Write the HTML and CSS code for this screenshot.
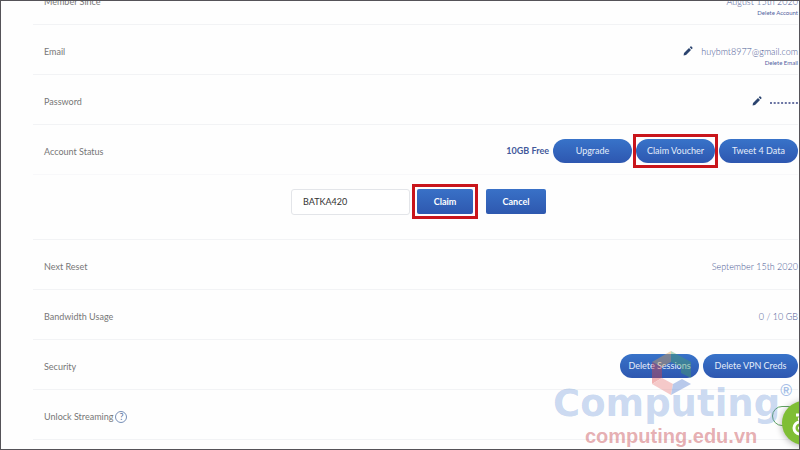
FILE: index.html
```html
<!DOCTYPE html>
<html lang="en">
<head>
<meta charset="utf-8">
<title>Account</title>
<link rel="stylesheet" href="styles.css">
</head>
<body>
<main class="account">
  <section class="row">
    <span class="label">Member Since</span>
    <div class="stack"><span class="value">August 15th 2020</span><a class="small-link" href="#">Delete Account</a></div>
  </section>
  <section class="row">
    <span class="label">Email</span>
    <button class="edit" aria-label="Edit email"><svg viewBox="0 0 10 10"><path d="M.6 9.4 1 7 6 2 8 4 3 9zM6.7 1.3 7.5.5Q8 .1 8.5.6L9.4 1.5Q9.8 2 9.4 2.5L8.6 3.3z"/></svg></button>
    <div class="stack"><span class="value">huybmt8977@gmail.com</span><a class="small-link" href="#">Delete Email</a></div>
  </section>
  <section class="row">
    <span class="label">Password</span>
    <button class="edit" aria-label="Edit password"><svg viewBox="0 0 10 10"><path d="M.6 9.4 1 7 6 2 8 4 3 9zM6.7 1.3 7.5.5Q8 .1 8.5.6L9.4 1.5Q9.8 2 9.4 2.5L8.6 3.3z"/></svg></button>
    <svg class="dots" viewBox="0 0 28 4" role="img" aria-label="Hidden password"><path d="M0 2h28"/></svg>
  </section>
  <section class="row soft">
    <span class="label">Account Status</span>
    <strong class="plan">10GB Free</strong>
    <div class="actions">
      <button class="pill">Upgrade</button>
      <button class="pill marked">Claim Voucher</button>
      <button class="pill">Tweet 4 Data</button>
    </div>
  </section>
  <form class="voucher">
    <input class="code" type="text" value="BATKA420" aria-label="Voucher code">
    <button class="btn marked" type="button">Claim</button>
    <button class="btn cancel" type="button">Cancel</button>
  </form>
  <section class="row">
    <span class="label">Next Reset</span>
    <span class="value">September 15th 2020</span>
  </section>
  <section class="row">
    <span class="label">Bandwidth Usage</span>
    <span class="value">0 / 10 GB</span>
  </section>
  <section class="row">
    <span class="label">Security</span>
    <div class="actions">
      <button class="pill">Delete Sessions</button>
      <button class="pill widest">Delete VPN Creds</button>
    </div>
  </section>
  <section class="row">
    <span class="label">Unlock Streaming <button class="help" aria-label="About streaming">?</button></span>
    <label class="toggle"><input type="checkbox" aria-label="Unlock Streaming"></label>
  </section>
</main>
<button class="chat" aria-label="Help">
  <svg viewBox="0 0 44 44"><g fill="none" stroke="#fff" stroke-width="3"><circle cx="18" cy="27" r="6"/><path d="M14 14h7M16 18h5"/></g><circle cx="18" cy="27" r="2" fill="#fff"/></svg>
</button>
<div class="watermark">
  <svg class="cube" viewBox="0 0 42 46"><path fill="#4aa564" d="M21 1 41 12V28L31 23V17L21 12z"/><path fill="#e3a04c" d="M21 1V12L12 17 2 12z"/><path fill="#e04444" d="M2 12 12 17V28L2 34z"/><path fill="#e87c7c" d="M2 34 12 28 23 34 21 45z"/><path fill="#527bd0" d="M23 34 32 29 41 34 21 45z"/></svg>
  <span class="brand">Computing</span>
  <span class="reg">®</span>
  <span class="site">computing.edu.vn</span>
</div>
</body>
</html>
```
FILE: styles.css
```css
* { box-sizing: border-box; }
body {
  margin: 0;
  height: 100vh;
  position: relative;
  overflow: hidden;
  border: 1px solid #555358;
  background: #fefefe;
  font-family: Lato, "Liberation Sans", sans-serif;
  font-size: 9px;
  line-height: 14px;
  color: #777;
}
button, input { font: inherit; }
button { padding: 0; border: 0; cursor: pointer; }
.account { margin: -26px 1px 0 32px; }
.row {
  display: flex;
  align-items: center;
  height: 50px;
  padding: 2px 0 0 11px;
  border-bottom: 1px solid #f2f3f5;
}
.soft { border-color: #f8f8fa; }
.label { flex: 1; display: flex; align-items: center; gap: 2px; }
.label, .value { padding-top: 2px; }
.value { font-weight: 300; color: #4a5994; }
.stack { position: relative; display: flex; }
.small-link {
  position: absolute;
  top: 16px;
  right: 0;
  font-size: 6px;
  line-height: 8px;
  white-space: nowrap;
  color: #5361a0;
  text-decoration: none;
}
.edit { width: 10px; height: 10px; margin-right: 8px; background: none; }
.edit svg { display: block; fill: #2b446f; }
.dots { width: 28px; height: 4px; margin-top: 4px; }
.dots path { fill: none; stroke: #6a74a3; stroke-width: 2; stroke-dasharray: 2 1.7; }
.plan { margin-right: 4px; color: #43599b; }
.actions { display: flex; gap: 4px; }
.pill {
  width: 79px;
  height: 24px;
  border-radius: 12px;
  background: linear-gradient(#3873c9, #2e57b0);
  color: #e5edfa;
}
.widest { width: 95px; }
.marked { position: relative; }
.marked::after {
  content: "";
  position: absolute;
  inset: -5px -3px;
  border: 3px solid #c9151b;
}
.voucher {
  display: flex;
  align-items: center;
  height: 65px;
  padding: 0 0 11px 258px;
  border-bottom: 1px solid #f2f3f5;
}
.code {
  width: 119px;
  height: 26px;
  margin-right: 7px;
  padding: 0 11px;
  border: 1px solid #e3e5e9;
  border-radius: 3px;
  background: #fff;
  color: #333;
}
.btn {
  width: 56px;
  height: 25px;
  border-radius: 2px;
  background: linear-gradient(#3971c7, #2e58af);
  color: #fff;
  font-weight: 700;
}
.btn.marked::after { inset: -5px; }
.cancel { width: 60px; margin-left: 13px; }
.help {
  width: 12px;
  height: 12px;
  border: 1px solid #7790b8;
  border-radius: 50%;
  background: none;
  color: #59749f;
  line-height: 10px;
}
.toggle { width: 26px; height: 20px; border: 1px solid #62a565; border-radius: 10px; }
.toggle input { opacity: 0; }
.chat {
  position: absolute;
  right: -27px;
  bottom: 4px;
  width: 44px;
  height: 44px;
  border-radius: 50%;
  background: #7fbe35;
  box-shadow: 0 1px 7px #0005;
}
.chat svg { display: block; width: 44px; height: 44px; }
.watermark { position: absolute; right: 4px; bottom: 5px; width: 242px; height: 96px; pointer-events: none; }
.cube { position: absolute; left: 97px; top: 2px; width: 42px; height: 46px; opacity: .4; }
.brand {
  position: absolute;
  left: 0;
  top: 34px;
  font: 700 37px/44px "DejaVu Sans", sans-serif;
  color: #4d7ed04d;
}
.reg { position: absolute; right: 3px; top: 34px; font: 700 16px/18px "Liberation Sans", sans-serif; color: #4d7ed080; }
.site {
  position: absolute;
  left: 32px;
  top: 78px;
  font: 700 20px/20px "Liberation Sans", sans-serif;
  color: #c84c5473;
}
```
